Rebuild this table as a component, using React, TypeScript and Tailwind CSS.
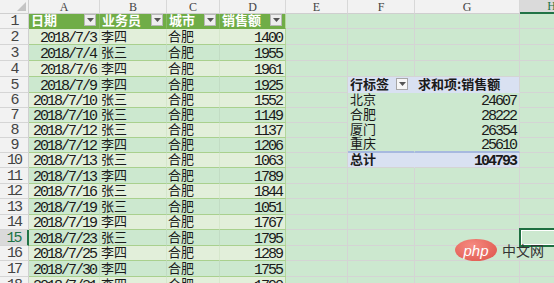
import React from 'react';

const cn = "font-['Noto_Sans_CJK_SC',sans-serif] text-[13px] leading-[13px] mb-[2px]";
const num = "font-['Liberation_Mono',monospace] text-[15px] tracking-[-2px] leading-[11px]";

const cols = [
  { key: 'A', w: 'w-[71px]' },
  { key: 'B', w: 'w-[67px]' },
  { key: 'C', w: 'w-[53px]' },
  { key: 'D', w: 'w-[66px]' },
  { key: 'E', w: 'w-[62px]' },
  { key: 'F', w: 'w-[67px]' },
  { key: 'G', w: 'w-[105px]' },
  { key: 'H', w: 'w-[64px]' },
];

const heights = [
  'h-[15px]', 'h-[16px]', 'h-[16px]', 'h-[16px]', 'h-[16px]', 'h-[15px]',
  'h-[15px]', 'h-[15px]', 'h-[15px]', 'h-[15px]', 'h-[16px]', 'h-[15px]',
  'h-[16px]', 'h-[15px]', 'h-[16px]', 'h-[15px]', 'h-[16px]', 'h-[16px]',
];

const sales = [
  ['2018/7/3', '李四', '合肥', '1400'],
  ['2018/7/4', '张三', '合肥', '1955'],
  ['2018/7/6', '李四', '合肥', '1961'],
  ['2018/7/9', '李四', '合肥', '1925'],
  ['2018/7/10', '张三', '合肥', '1552'],
  ['2018/7/10', '张三', '合肥', '1149'],
  ['2018/7/12', '张三', '合肥', '1137'],
  ['2018/7/12', '李四', '合肥', '1206'],
  ['2018/7/13', '张三', '合肥', '1063'],
  ['2018/7/13', '李四', '合肥', '1789'],
  ['2018/7/16', '张三', '合肥', '1844'],
  ['2018/7/19', '张三', '合肥', '1051'],
  ['2018/7/19', '李四', '合肥', '1767'],
  ['2018/7/23', '张三', '合肥', '1795'],
  ['2018/7/25', '李四', '合肥', '1289'],
  ['2018/7/30', '李四', '合肥', '1755'],
  ['2018/7/31', '李四', '合肥', '1790'],
];

const pivot = [
  ['北京', '24607'],
  ['合肥', '28222'],
  ['厦门', '26354'],
  ['重庆', '25610'],
];

function DropBtn({ light }: { light?: boolean }) {
  return (
    <span
      className={`mb-[2px] ml-auto mr-[3px] flex h-[12px] w-[12px] shrink-0 items-center justify-center border ${
        light ? 'border-[#a7a7a7] bg-[#f7f7f7]' : 'border-[#b8b8b8] bg-[#eeeeee]'
      }`}
    >
      <svg width="7" height="4" viewBox="0 0 7 4">
        <polygon points="0,0 7,0 3.5,4" fill="#555" />
      </svg>
    </span>
  );
}

function Cell({ r, c }: { r: number; c: number }) {
  const w = cols[c].w;
  // data table A:D
  if (c < 4) {
    const edge = c === 3 ? 'border-r-[#b3d69c]' : '';
    if (r === 1) {
      const labels = ['日期', '业务员', '城市', '销售额'];
      return (
        <div
          className={`${w} flex shrink-0 items-end border-r border-b border-b-[#70ad47] bg-[#70ad47] pl-[2px] text-white ${
            edge || 'border-r-[#86bb63]'
          }`}
        >
          <span className={`${cn} font-bold`}>{labels[c]}</span>
          <DropBtn />
        </div>
      );
    }
    const row = sales[r - 2];
    const band = r % 2 === 0;
    const fill = band ? 'bg-[#e2efda]' : '';
    const inner = band ? 'border-r-[#d6e7cc]' : 'border-r-[#c2dcc4]';
    const right = c === 0 || c === 3;
    return (
      <div
        className={`${w} flex shrink-0 items-end border-r border-b border-b-[#a9d08e] text-[#1a1a1a] ${fill} ${
          edge || inner
        } ${right ? 'justify-end pr-[3px]' : 'pl-[1px]'}`}
      >
        <span className={right ? num : cn}>{row[c]}</span>
      </div>
    );
  }

  // pivot table F:G, rows 5-10
  if ((c === 5 || c === 6) && r >= 5 && r <= 10) {
    const isF = c === 5;
    const head = r === 5;
    const total = r === 10;
    const fill = head || total ? 'bg-[#d9e1f2]' : '';
    const bottom =
      r === 9 ? 'border-b-2 border-b-[#a7b9df]' : total ? 'border-b border-b-[#d4d4d4]' : 'border-b border-b-transparent';
    const rightB = isF ? 'border-r border-r-transparent' : 'border-r border-r-[#d4d4d4]';
    let content: React.ReactNode = null;
    if (head) {
      content = isF ? (
        <>
          <span className={`${cn} font-bold`}>行标签</span>
          <DropBtn light />
        </>
      ) : (
        <span className={`${cn} pl-[1px] font-bold`}>求和项:销售额</span>
      );
    } else if (total) {
      content = isF ? (
        <span className={`${cn} font-bold`}>总计</span>
      ) : (
        <span className={`${num} ml-auto font-bold`}>104793</span>
      );
    } else {
      const p = pivot[r - 6];
      content = isF ? <span className={cn}>{p[0]}</span> : <span className={`${num} ml-auto`}>{p[1]}</span>;
    }
    return (
      <div className={`${w} flex shrink-0 items-end pl-[2px] pr-[3px] text-[#1a1a1a] ${fill} ${bottom} ${rightB}`}>
        {content}
      </div>
    );
  }

  if (c === 7 && r === 15) {
    return (
      <div className={`${w} relative shrink-0 border-r border-b border-[#d4d4d4]`}>
        <div className="absolute left-[-1px] top-[-2px] h-[19px] w-[70px] border-2 border-[#1e6e40] shadow-[inset_0_0_0_1px_#ffffff]" />
      </div>
    );
  }

  return <div className={`${w} shrink-0 border-r border-b border-[#d4d4d4]`} />;
}

export default function App() {
  const rows = Array.from({ length: 18 }, (_, i) => i + 1);
  return (
    <div className="relative h-[283px] w-[554px] overflow-hidden bg-[#cce8cf]">
      {/* column letters */}
      <div className="flex h-[14px]">
        <div className="relative w-[29px] shrink-0 border-r border-b border-[#cfcfcf] bg-[#f2f2f2]">
          <svg className="absolute right-[2px] bottom-[2px]" width="9" height="9" viewBox="0 0 9 9">
            <polygon points="9,0 9,9 0,9" fill="#c4c4c4" />
          </svg>
        </div>
        {cols.map((col) => {
          const sel = col.key === 'H';
          return (
            <div
              key={col.key}
              className={`${col.w} flex shrink-0 items-center justify-center border-r font-['Liberation_Serif',serif] text-[12px] leading-none ${
                sel
                  ? 'border-r-[#cfcfcf] border-b-2 border-b-[#217346] bg-[#dadada] text-[#217346]'
                  : 'border-r-[#d8d8d8] border-b border-b-[#cfcfcf] bg-[#f2f2f2] text-[#444]'
              }`}
            >
              {col.key}
            </div>
          );
        })}
      </div>

      {rows.map((r) => {
        const sel = r === 15;
        return (
          <div key={r} className={`flex ${heights[r - 1]}`}>
            <div
              className={`flex w-[29px] shrink-0 items-end justify-center border-b border-b-[#d5d5d5] ${
                sel
                  ? 'border-r-2 border-r-[#217346] bg-[#dadada] text-[#217346]'
                  : 'border-r border-r-[#cfcfcf] bg-[#f2f2f2] text-[#444]'
              }`}
            >
              <span className={`${num} mb-[1px]`}>{r}</span>
            </div>
            {cols.map((_, c) => (
              <Cell key={c} r={r} c={c} />
            ))}
          </div>
        );
      })}

      {/* watermark */}
      <div className="absolute left-[455px] top-[239px] flex items-center gap-[5px]">
        <div className="flex h-[22px] w-[42px] items-center justify-center rounded-[50%] bg-[radial-gradient(ellipse_at_40%_30%,#f58a80,#dd5248)]">
          <span className="font-['Liberation_Sans',sans-serif] text-[15px] italic leading-none text-white">php</span>
        </div>
        <span className="font-['Noto_Sans_CJK_SC',sans-serif] text-[14px] leading-none text-[#333]">中文网</span>
      </div>
    </div>
  );
}
